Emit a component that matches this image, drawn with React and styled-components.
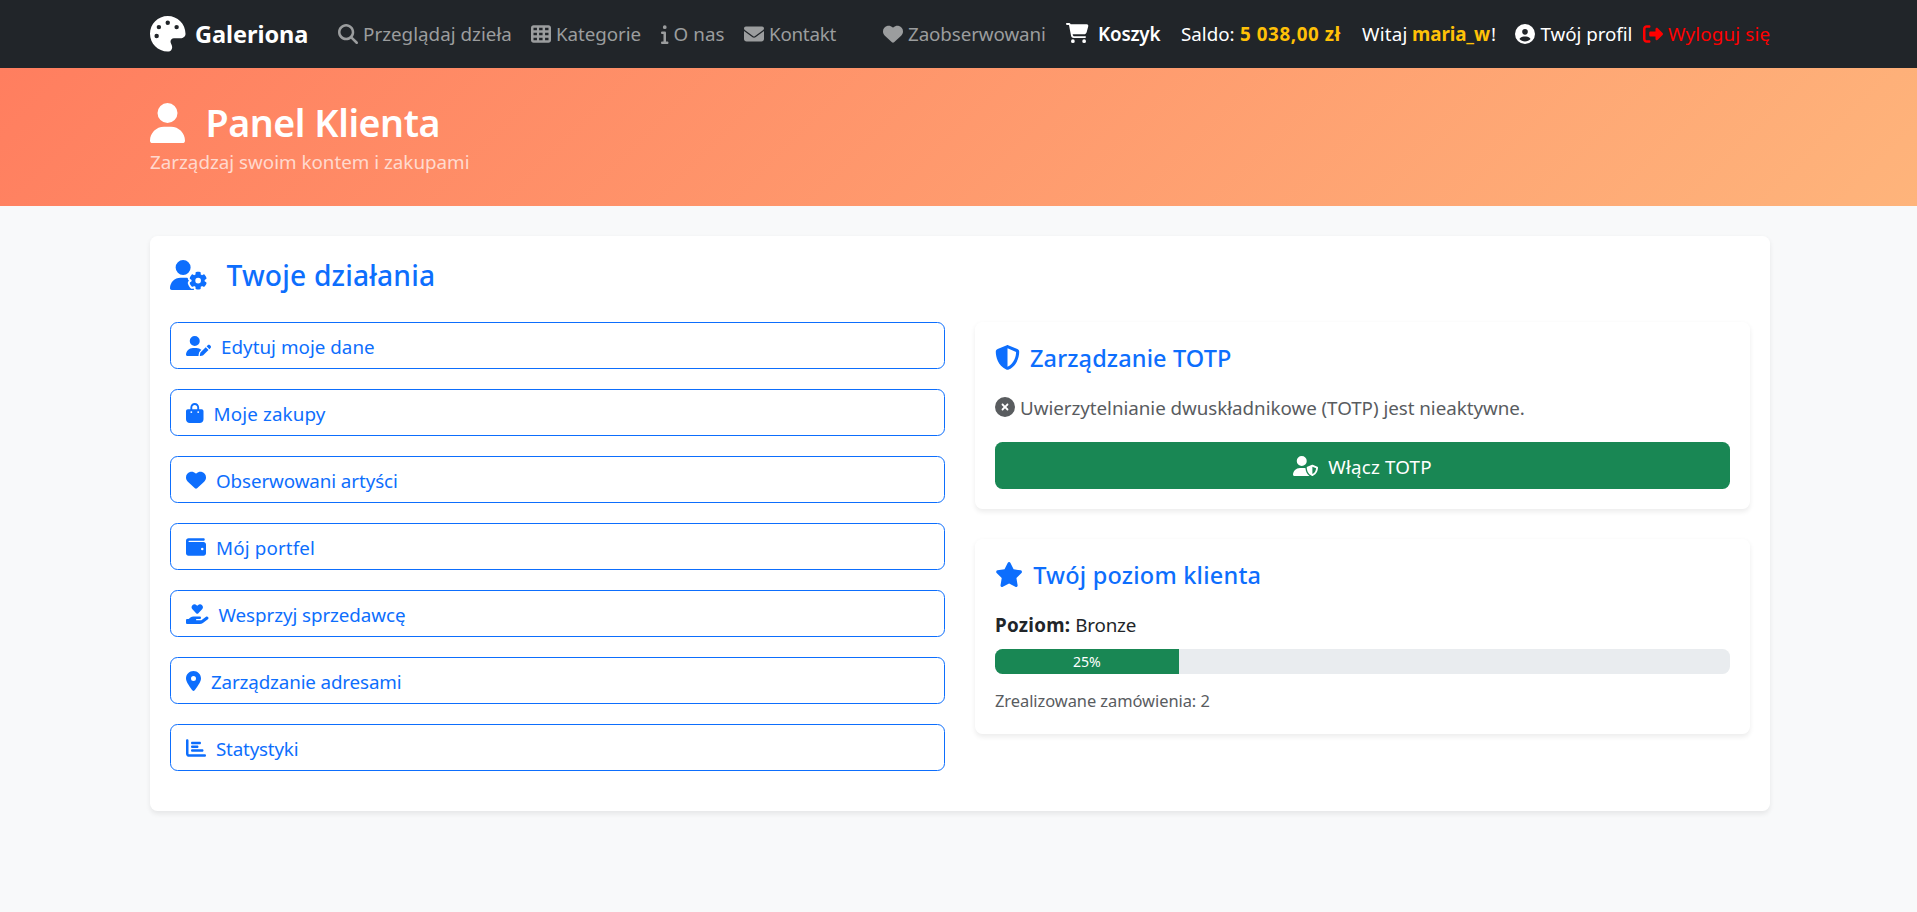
import React from 'react';
import styled, { createGlobalStyle } from 'styled-components';
import {
  FaPalette, FaMagnifyingGlass, FaTableCells, FaInfo, FaEnvelope, FaHeart, FaCartShopping,
  FaCircleUser, FaRightFromBracket, FaUser, FaUserGear, FaUserPen, FaBagShopping, FaWallet,
  FaHandHoldingHeart, FaLocationDot, FaChartBar, FaShieldHalved, FaCircleXmark, FaUserShield, FaStar,
} from 'react-icons/fa6';

const GlobalStyle = createGlobalStyle`
  *, *::before, *::after { box-sizing: border-box; }
  body {
    margin: 0;
    min-height: 100vh;
    background: #f8f9fa;
    color: #212529;
    font-family: "Noto Sans", "Open Sans", sans-serif;
    font-size: 18.8px;
    line-height: 30px;
  }
  a { color: inherit; text-decoration: none; }
  h1, h2, h3, p { margin: 0; }
`;

const Container = styled.div`
  width: 1620px;
  margin-left: 150px;
`;

/* $units is the glyph's width on the 512-unit-high icon grid */
const Icon = styled.span`
  display: flex;
  flex: none;
  padding-top: ${({ $drop = 0 }) => $drop}px;
  padding-bottom: ${({ $lift = 0 }) => $lift}px;
  svg {
    display: block;
    height: ${({ $size = 20 }) => $size}px;
    width: ${({ $size = 20, $units = 512 }) => ($size * $units) / 512}px;
  }
`;

const Text = styled.span`
  flex: none;
  width: ${({ $w }) => ($w ? `${$w}px` : 'auto')};
  margin-left: ${({ $gap = 0 }) => $gap}px;
  padding-top: ${({ $drop = 0 }) => $drop}px;
  letter-spacing: ${({ $ls = 0 }) => $ls}px;
  font-weight: ${({ $weight = 'inherit' }) => $weight};
  color: ${({ $color = 'inherit' }) => $color};
  white-space: nowrap;
`;

const Navbar = styled.nav`
  height: 68px;
  background: #212529;
  color: #fff;
`;

const NavRow = styled(Container)`
  display: flex;
  align-items: center;
  height: 100%;
`;

const Brand = styled.a`
  display: flex;
  align-items: center;
  margin-right: 30px;
  font-size: 23.5px;
  font-weight: 700;
`;

const NavGroup = styled.div`
  display: flex;
  gap: 20px;
`;

const EndGroup = styled(NavGroup)`
  margin-left: auto;
`;

const NavItem = styled.a`
  display: flex;
  align-items: center;
  color: ${({ $color = '#9b9d9e' }) => $color};
`;

const LogoutItem = styled(NavItem)`
  margin-left: -10px;
`;

const Hero = styled.header`
  height: 138px;
  padding-top: 30px;
  background: linear-gradient(135deg, #ff7e5f, #feb47b);
  color: #fff;
`;

const HeroTitle = styled.h1`
  display: flex;
  align-items: center;
  height: 48px;
  font-size: 37.6px;
  font-weight: 600;
  line-height: 48px;
`;

const HeroLead = styled.p`
  margin-top: 1px;
  line-height: 30px;
  color: rgba(255, 255, 255, 0.7);
`;

const Card = styled.section`
  padding: 20px;
  background: #fff;
  border-radius: 7.5px;
  box-shadow: 0 2.5px 5px rgba(0, 0, 0, 0.075);
`;

const MainCard = styled(Card)`
  height: 575px;
  margin-top: 30px;
`;

const CardTitle = styled.h2`
  display: flex;
  align-items: center;
  height: 36px;
  margin-bottom: 30px;
  color: #0d6efd;
  font-size: 28.2px;
  font-weight: 500;
`;

const Columns = styled.div`
  display: grid;
  grid-template-columns: 775px 775px;
  gap: 30px;
`;

const Stack = styled.div`
  display: flex;
  flex-direction: column;
  gap: ${({ $gap }) => $gap}px;
`;

const ActionLink = styled.a`
  display: flex;
  align-items: center;
  height: 47px;
  padding: 0 15px;
  border: 1px solid #0d6efd;
  border-radius: 7.5px;
  color: #0d6efd;
`;

const PanelTitle = styled.h3`
  display: flex;
  align-items: center;
  height: 30px;
  margin-bottom: 20px;
  color: #0d6efd;
  font-size: 23.5px;
  font-weight: 500;
`;

const Status = styled.p`
  display: flex;
  align-items: center;
  height: 30px;
  margin-bottom: 20px;
  color: #595c5f;
`;

const SuccessButton = styled.a`
  display: flex;
  align-items: center;
  justify-content: center;
  height: 47px;
  border-radius: 7.5px;
  background: #198754;
  color: #fff;
`;

const Level = styled.p`
  display: flex;
  padding-top: 1px;
  margin-bottom: 9px;
`;

const Progress = styled.div`
  height: 25px;
  margin-bottom: 14px;
  overflow: hidden;
  border-radius: 7.5px;
  background: #e9ecef;
`;

const ProgressFill = styled.div`
  width: 25%;
  height: 100%;
  background: #198754;
  color: #fff;
  font-size: 14.1px;
  line-height: 25px;
  text-align: center;
`;

const Orders = styled.p`
  height: 26px;
  font-size: 16.45px;
  line-height: 25px;
  color: #595c5f;
`;

const LINKS = [
  { icon: FaMagnifyingGlass, label: 'Przeglądaj dzieła', gap: 5, w: 148, ls: 0.02 },
  { icon: FaTableCells, label: 'Kategorie', gap: 5, w: 85, ls: -0.07 },
  { icon: FaInfo, units: 192, label: 'O nas', gap: 5, w: 50.5, ls: 0.08 },
  { icon: FaEnvelope, label: 'Kontakt', gap: 5, w: 68, ls: -0.24 },
];

const ACTIONS = [
  { icon: FaUserPen, units: 640, label: 'Edytuj moje dane', ls: 0.03 },
  { icon: FaBagShopping, units: 448, label: 'Moje zakupy', ls: 0.14 },
  { icon: FaHeart, units: 512, label: 'Obserwowani artyści', ls: -0.09 },
  { icon: FaWallet, units: 512, label: 'Mój portfel', ls: 0.14 },
  { icon: FaHandHoldingHeart, units: 576, label: 'Wesprzyj sprzedawcę', ls: -0.07 },
  { icon: FaLocationDot, units: 384, label: 'Zarządzanie adresami', ls: -0.14 },
  { icon: FaChartBar, units: 512, label: 'Statystyki', ls: -0.19 },
];

export default function App() {
  return (
    <>
      <GlobalStyle />
      <Navbar>
        <NavRow>
          <Brand>
            <Icon $size={35.5}><FaPalette /></Icon>
            <Text $gap={9.5} $w={113} $ls={-0.04}>Galeriona</Text>
          </Brand>
          <NavGroup>
            {LINKS.map(({ icon: Glyph, units, label, gap, w, ls }) => (
              <NavItem key={label}>
                <Icon $units={units}><Glyph /></Icon>
                <Text $gap={gap} $w={w} $ls={ls}>{label}</Text>
              </NavItem>
            ))}
          </NavGroup>
          <EndGroup>
            <NavItem>
              <Icon><FaHeart /></Icon>
              <Text $gap={5} $w={138} $ls={-0.1}>Zaobserwowani</Text>
            </NavItem>
            <NavItem $color="#fff">
              <Icon $units={576} $lift={3}><FaCartShopping /></Icon>
              <Text $gap={9.5} $w={63} $ls={-0.18} $weight={600}>Koszyk</Text>
            </NavItem>
            <NavItem $color="#fff">
              <Text $w={54}>Saldo:</Text>
              <Text $gap={5} $w={102} $ls={0.57} $weight={700} $color="#ffc107">5 038,00 zł</Text>
            </NavItem>
            <NavItem $color="#fff">
              <Text $w={45} $ls={0.22}>Witaj</Text>
              <Text $gap={5} $w={79} $ls={-0.09} $weight={700} $color="#ffc107">maria_w</Text>
              <Text $w={4}>!</Text>
            </NavItem>
            <NavItem $color="#fff">
              <Icon><FaCircleUser /></Icon>
              <Text $gap={5.5} $w={92.5} $ls={-0.05}>Twój profil</Text>
            </NavItem>
            <LogoutItem $color="#ff0000">
              <Icon><FaRightFromBracket /></Icon>
              <Text $gap={5} $w={102} $ls={0.15}>Wyloguj się</Text>
            </LogoutItem>
          </EndGroup>
        </NavRow>
      </Navbar>

      <Hero>
        <Container>
          <HeroTitle>
            <Icon $size={40} $units={448} $drop={2}><FaUser /></Icon>
            <Text $gap={20.5} $ls={-0.44} $drop={2}>Panel Klienta</Text>
          </HeroTitle>
          <HeroLead>Zarządzaj swoim kontem i zakupami</HeroLead>
        </Container>
      </Hero>

      <Container as="main">
        <MainCard>
          <CardTitle>
            <Icon $size={30} $units={640} $drop={2}><FaUserGear /></Icon>
            <Text $gap={19} $ls={0.17} $drop={2}>Twoje działania</Text>
          </CardTitle>
          <Columns>
            <Stack $gap={20}>
              {ACTIONS.map(({ icon: Glyph, units, label, ls }) => (
                <ActionLink key={label}>
                  <Icon $units={units}><Glyph /></Icon>
                  <Text $gap={10} $ls={ls} $drop={2}>{label}</Text>
                </ActionLink>
              ))}
            </Stack>
            <Stack $gap={30}>
              <Card>
                <PanelTitle>
                  <Icon $size={25}><FaShieldHalved /></Icon>
                  <Text $gap={10} $ls={0.13} $drop={2}>Zarządzanie TOTP</Text>
                </PanelTitle>
                <Status>
                  <Icon><FaCircleXmark /></Icon>
                  <Text $gap={5} $ls={-0.04} $drop={1}>Uwierzytelnianie dwuskładnikowe (TOTP) jest nieaktywne.</Text>
                </Status>
                <SuccessButton>
                  <Icon $units={640}><FaUserShield /></Icon>
                  <Text $gap={10} $ls={0.2} $drop={2}>Włącz TOTP</Text>
                </SuccessButton>
              </Card>
              <Card>
                <PanelTitle>
                  <Icon $size={25} $units={576}><FaStar /></Icon>
                  <Text $gap={10} $ls={0.22} $drop={2}>Twój poziom klienta</Text>
                </PanelTitle>
                <Level>
                  <Text $weight={700} $ls={0.26}>Poziom:</Text>
                  <Text $gap={5} $ls={-0.18}>Bronze</Text>
                </Level>
                <Progress>
                  <ProgressFill>25%</ProgressFill>
                </Progress>
                <Orders><Text $ls={-0.05}>Zrealizowane zamówienia: 2</Text></Orders>
              </Card>
            </Stack>
          </Columns>
        </MainCard>
      </Container>
    </>
  );
}
